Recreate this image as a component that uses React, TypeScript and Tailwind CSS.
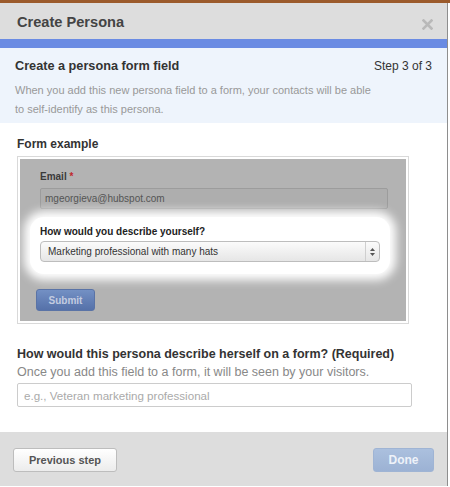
export default function App() {
  return (
    <div className="w-[450px] h-[487px] bg-white overflow-hidden font-['Liberation_Sans',Arial,sans-serif]">
      {/* top strip */}
      <div className="h-[3px] bg-[#9b5a2b]" />

      <div className="w-[448px] h-[483px] border-r border-[#8e8e8e] flex flex-col">
        {/* HEADER */}
        <div className="h-[36px] bg-[#dddddd] flex items-center justify-between pl-[17px] pr-[14px] pt-[4px]">
          <h1 className="text-[14.6px] font-bold text-[#444]">Create Persona</h1>
          <svg width="11" height="11" viewBox="0 0 11 11" className="mt-[3px]">
            <path d="M1.5 1.5 L9.5 9.5 M9.5 1.5 L1.5 9.5" stroke="#b9b9b9" strokeWidth="2.6" strokeLinecap="square" />
          </svg>
        </div>
        <div className="h-[9px] bg-[#6a8be3]" />

        {/* STEP INFO */}
        <div className="h-[75px] bg-[#eef4fc] px-[15px] pt-[9px]">
          <div className="flex justify-between items-center leading-[18px]">
            <h2 className="text-[12.7px] font-bold text-[#333]">Create a persona form field</h2>
            <span className="text-[12px] text-[#333]">Step 3 of 3</span>
          </div>
          <p className="mt-[6px] text-[11px] leading-[19px] text-[#999]">
            When you add this new persona field to a form, your contacts will be able
            <br />
            to self-identify as this persona.
          </p>
        </div>

        {/* BODY */}
        <div className="h-[309px] bg-white px-[17px] pt-[12px]">
          <h3 className="text-[12px] leading-[18px] font-bold text-[#333]">Form example</h3>

          <div className="mt-[3px] w-[392px] border border-[#d9d9d9] p-[2px]">
            <div className="h-[162px] bg-[#b3b3b3] pl-[20px] pr-[18px] pt-[10px]">
              <label className="block text-[10px] leading-[15px] font-bold text-[#3a3a3a]">
                Email <span className="text-[#c0282d]">*</span>
              </label>
              <div className="mt-[4px] h-[21px] border border-[#9c9c9c] rounded-[2px] bg-[#aeaeae] pl-[4px] flex items-center text-[10px] text-[#555]">
                mgeorgieva@hubspot.com
              </div>

              {/* highlighted field */}
              <div className="mt-[8px] -ml-[10px] w-[360px] px-[10px] pt-[7px] pb-[12px] bg-white rounded-[14px] shadow-[0_0_10px_6px_#ffffff]">
                <label className="block text-[10px] leading-[15px] font-bold text-[#222]">
                  How would you describe yourself?
                </label>
                <div className="mt-[2px] h-[21px] border border-[#bdbdbd] rounded-[4px] bg-linear-to-b from-[#fbfbfb] to-[#e6e6e6] flex items-center text-[10px] text-[#333]">
                  <span className="flex-1 pl-[7px]">Marketing professional with many hats</span>
                  <div className="h-full w-[14px] border-l border-[#cfcfcf] flex flex-col items-center justify-center gap-[2px]">
                    <svg width="5" height="3" viewBox="0 0 5 3"><path d="M2.5 0 L5 3 L0 3 Z" fill="#555" /></svg>
                    <svg width="5" height="3" viewBox="0 0 5 3"><path d="M0 0 L5 0 L2.5 3 Z" fill="#555" /></svg>
                  </div>
                </div>
              </div>

              <button className="mt-[15px] -ml-[4px] w-[59px] h-[22px] rounded-[3px] border border-[#5a73a6] bg-linear-to-b from-[#7390c4] to-[#5571a9] text-[10px] font-bold text-[#c3cce0]">
                Submit
              </button>
            </div>
          </div>

          <h3 className="mt-[21px] text-[12.5px] leading-[18px] font-bold text-[#333]">
            How would this persona describe herself on a form? (Required)
          </h3>
          <p className="text-[12.5px] leading-[18px] text-[#888]">
            Once you add this field to a form, it will be seen by your visitors.
          </p>
          <input
            placeholder="e.g., Veteran marketing professional"
            className="mt-[2px] w-[395px] h-[24px] border border-[#cccccc] rounded-[2px] px-[6px] text-[11.6px] text-[#333] placeholder:text-[#aaaaaa] outline-none"
          />
        </div>

        {/* FOOTER */}
        <div className="flex-1 bg-[#dddddd] flex justify-between items-start px-[13px] pt-[16px]">
          <button className="w-[104px] h-[24px] rounded-[3px] border border-[#bdbdbd] bg-linear-to-b from-[#ffffff] to-[#ececec] text-[11px] font-bold text-[#555]">
            Previous step
          </button>
          <button className="w-[61px] h-[24px] rounded-[3px] border border-[#9fb4d4] bg-linear-to-b from-[#abc0de] to-[#9cb2d4] text-[12px] font-bold text-[#eef2f9]">
            Done
          </button>
        </div>
      </div>
    </div>
  )
}
